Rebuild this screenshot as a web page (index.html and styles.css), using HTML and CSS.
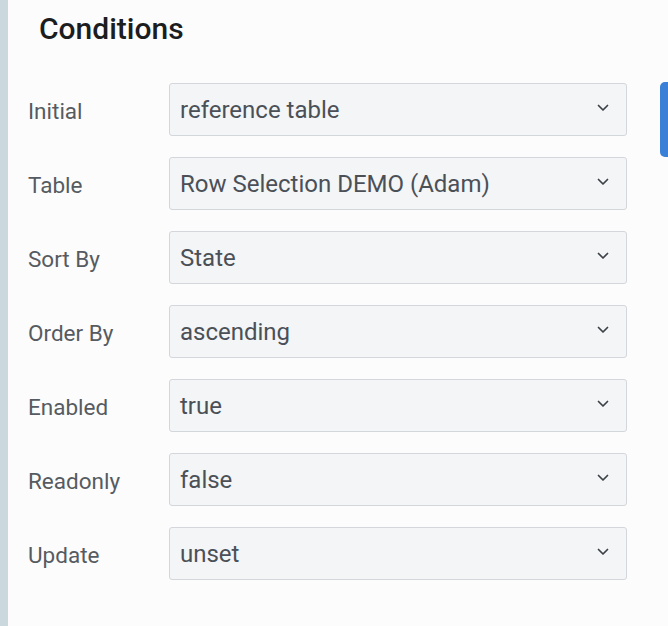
FILE: index.html
```html
<!DOCTYPE html>
<html>
<head>
<meta charset="utf-8">
<link rel="stylesheet" href="styles.css">
</head>
<body>
<div class="frame">
  <div class="strip"></div>
  <div class="panel">
    <h2 class="title">Conditions</h2>
    <div class="form">
      <label class="label">Initial</label>
      <div class="select"><span>reference table</span><svg class="chev" viewBox="0 0 12 8"><path d="M1.5 1.5l4.5 4.5 4.5-4.5"/></svg></div>
      <label class="label">Table</label>
      <div class="select"><span>Row Selection DEMO (Adam)</span><svg class="chev" viewBox="0 0 12 8"><path d="M1.5 1.5l4.5 4.5 4.5-4.5"/></svg></div>
      <label class="label">Sort By</label>
      <div class="select"><span>State</span><svg class="chev" viewBox="0 0 12 8"><path d="M1.5 1.5l4.5 4.5 4.5-4.5"/></svg></div>
      <label class="label">Order By</label>
      <div class="select"><span>ascending</span><svg class="chev" viewBox="0 0 12 8"><path d="M1.5 1.5l4.5 4.5 4.5-4.5"/></svg></div>
      <label class="label">Enabled</label>
      <div class="select"><span>true</span><svg class="chev" viewBox="0 0 12 8"><path d="M1.5 1.5l4.5 4.5 4.5-4.5"/></svg></div>
      <label class="label">Readonly</label>
      <div class="select"><span>false</span><svg class="chev" viewBox="0 0 12 8"><path d="M1.5 1.5l4.5 4.5 4.5-4.5"/></svg></div>
      <label class="label">Update</label>
      <div class="select"><span>unset</span><svg class="chev" viewBox="0 0 12 8"><path d="M1.5 1.5l4.5 4.5 4.5-4.5"/></svg></div>
    </div>
  </div>
  <div class="rail"><div class="tab"></div></div>
</div>
</body>
</html>
```

FILE: styles.css
```css
html, body {
  margin: 0;
  padding: 0;
  background: #fcfcfc;
  font-family: Roboto, "Liberation Sans", sans-serif;
}
.frame {
  display: flex;
  width: 668px;
  height: 626px;
  overflow: hidden;
}
.strip {
  width: 8px;
  flex: none;
  background: #cbd8dd;
}
.panel {
  flex: 1;
  background: #fcfcfc;
}
.title {
  margin: 0;
  padding: 11px 0 0 31px;
  height: 83px;
  box-sizing: border-box;
  font-size: 30px;
  font-weight: 500;
  line-height: 36px;
  color: #1c1d1f;
}
.form {
  display: grid;
  grid-template-columns: 141px 458px;
  grid-auto-rows: 53px;
  row-gap: 21px;
  padding-left: 20px;
}
.label {
  display: flex;
  align-items: center;
  padding-top: 2px;
  font-size: 22.5px;
  color: #565b61;
}
.select {
  display: flex;
  align-items: center;
  justify-content: space-between;
  box-sizing: border-box;
  border: 1.5px solid #d3d6da;
  border-radius: 3px;
  background: #f3f5f7;
  padding: 0 17px 0 10px;
  font-size: 24px;
  color: #4b5057;
}
.chev {
  width: 12px;
  height: 8px;
  margin-top: -4px;
}
.chev path {
  fill: none;
  stroke: #3d4147;
  stroke-width: 1.7;
  stroke-linecap: round;
  stroke-linejoin: round;
}
.rail {
  width: 8px;
  flex: none;
  padding-top: 82px;
}
.tab {
  height: 75px;
  background: #3a80d6;
  border-radius: 5px 0 0 5px;
}
```
